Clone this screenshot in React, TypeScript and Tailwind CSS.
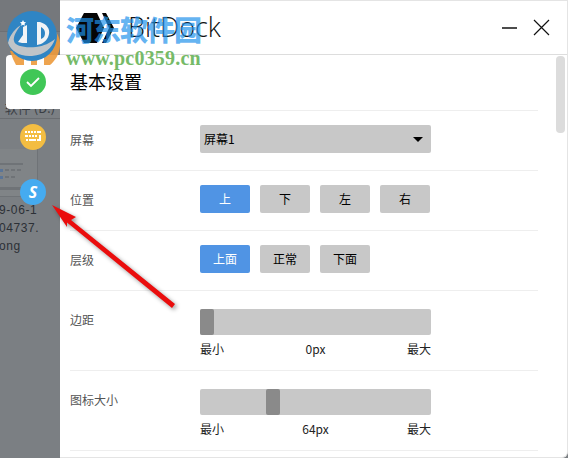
import React, { FC } from 'react';

const cjk = { fontFamily: '"Noto Sans CJK SC", "Liberation Sans", sans-serif' };

const Row: FC<{ label: string; h: string; children: React.ReactNode }> = ({ label, h, children }) => (
  <div className={`flex border-b border-[#eeeeee] ${h}`}>
    <div className="w-[130px] pt-[20px] text-[12px] leading-[18px] text-[#555555]">{label}</div>
    <div className="flex-1 pt-[14px]">{children}</div>
  </div>
);

const Btn: FC<{ text: string; active?: boolean }> = ({ text, active }) => (
  <div
    className={`flex h-[28px] w-[50px] items-center justify-center rounded-[2px] text-[12px] ${
      active ? 'bg-[#5094e4] text-white' : 'bg-[#c8c8c8] text-black'
    }`}
  >
    {text}
  </div>
);

const Slider: FC<{ value: string; thumbClass: string }> = ({ value, thumbClass }) => (
  <div className="w-[231px] pt-[4px]">
    <div className="h-[26px] rounded-[2px] bg-[#c8c8c8]">
      <div className={`h-[26px] w-[14px] rounded-[2px] bg-[#8a8a8a] ${thumbClass}`} />
    </div>
    <div className="mt-[5px] flex justify-between text-[12px] leading-[18px] text-[#222222]">
      <span>最小</span>
      <span>{value}</span>
      <span>最大</span>
    </div>
  </div>
);

const App: FC = () => {
  return (
    <div className="relative flex h-[458px] w-[568px] overflow-hidden bg-[#7b7f83]" style={cjk}>
      {/* desktop peeking out on the left */}
      <div className="flex w-[60px] shrink-0 flex-col overflow-hidden text-[#2c3036]">
        <div className="h-[32px] shrink-0 border-b border-[#6d7074] bg-[#75787c]" />
        <div className="flex h-[87px] shrink-0 items-end justify-center border-b border-[#6a6d71] pb-[1px] text-[13px] leading-[18px] whitespace-nowrap text-[#3a3e44]">
          软件 (D:)
        </div>
        <div className="h-[30px] shrink-0" />
        <div className="h-[48px] w-[38px] shrink-0 border-r border-b border-[#6f7377] bg-[#808487]">
          <div className="mt-[14px] h-[2px] w-[23px] bg-[#6f7377]" />
          <div className="mt-[4px] flex gap-[2px]">
            <div className="h-[3px] w-[3px] bg-[#5a7598]" />
            <div className="h-[2px] w-[4px] bg-[#6f7377]" />
            <div className="h-[2px] w-[4px] bg-[#6f7377]" />
            <div className="h-[2px] w-[4px] bg-[#6f7377]" />
          </div>
          <div className="mt-[4px] flex gap-[2px]">
            <div className="h-[3px] w-[3px] bg-[#5a7598]" />
            <div className="h-[2px] w-[4px] bg-[#6f7377]" />
            <div className="h-[2px] w-[4px] bg-[#6f7377]" />
          </div>
          <div className="mt-[8px] h-[3px] w-[34px] bg-[#6f7377]" />
        </div>
        <div className="mt-[4px] text-[12px] leading-[18px] whitespace-nowrap" style={{ fontFamily: '"Liberation Sans", sans-serif' }}>
          <div className="-ml-[1px] tracking-[0.6px]">9-06-1</div>
          <div className="-ml-[1px] tracking-[0.6px]">04737.</div>
          <div className="-ml-[1px] tracking-[0.6px]">ong</div>
        </div>
      </div>

      {/* settings window */}
      <div className="relative flex flex-1 flex-col overflow-hidden rounded-br-[6px] border-t border-r border-b border-[#e4e4e4] bg-white">
        <div className="flex h-[54px] shrink-0 items-center border-b border-[#dddddd] pl-[16px]">
          <svg width="38" height="30" viewBox="0 0 38 30" className="shrink-0">
            <path d="M8 0h13l7 15-7 15H8L0 15z" fill="#050505" />
            <path d="M26 0h4l8 15-8 15h-4l7-15z" fill="#050505" />
          </svg>
          <span className="ml-[14px] text-[27px] font-light text-[#111111]" style={{ fontFamily: '"Open Sans", sans-serif' }}>
            BitDock
          </span>
          <div className="ml-auto mr-[17px] flex items-center gap-[15px]">
            <svg width="16" height="16" viewBox="0 0 16 16">
              <path d="M0 8h15" stroke="#111" strokeWidth="1.4" />
            </svg>
            <svg width="17" height="17" viewBox="0 0 17 17">
              <path d="M1 1l15 15M16 1L1 16" stroke="#111" strokeWidth="1.2" fill="none" />
            </svg>
          </div>
        </div>

        <div className="relative flex-1 overflow-hidden pl-[10px] pr-[29px]">
          <div className="flex h-[56px] items-center border-b border-[#eeeeee] pb-[2px] text-[18px] text-black">基本设置</div>
          <Row label="屏幕" h="h-[60px]">
            <div className="flex h-[28px] w-[231px] items-center justify-between rounded-[2px] bg-[#c8c8c8] pl-[4px] pr-[8px] text-[12px] text-black">
              <span>屏幕1</span>
              <svg width="10" height="5" viewBox="0 0 10 5">
                <path d="M0 0h10L5 5z" fill="#000" />
              </svg>
            </div>
          </Row>
          <Row label="位置" h="h-[60px]">
            <div className="flex gap-[10px]">
              <Btn text="上" active />
              <Btn text="下" />
              <Btn text="左" />
              <Btn text="右" />
            </div>
          </Row>
          <Row label="层级" h="h-[60px]">
            <div className="flex gap-[10px]">
              <Btn text="上面" active />
              <Btn text="正常" />
              <Btn text="下面" />
            </div>
          </Row>
          <Row label="边距" h="h-[80px]">
            <Slider value="0px" thumbClass="ml-0" />
          </Row>
          <Row label="图标大小" h="h-[80px]">
            <Slider value="64px" thumbClass="ml-[66px]" />
          </Row>

          <div className="absolute right-[2px] top-[1px] h-[77px] w-[9px] rounded-[4px] bg-[#dcdcdc]" />
        </div>
      </div>

      {/* popup card, sits over the desktop and the window */}
      <div className="absolute left-[6px] top-[55px] flex h-[54px] w-[54px] items-center justify-center rounded-l-[4px] bg-white">
        <div className="flex h-[26px] w-[26px] items-center justify-center rounded-full bg-[#40c757]">
          <svg width="16" height="12" viewBox="0 0 16 12">
            <path d="M2 6l4 4 8-8" stroke="#fff" strokeWidth="1.8" fill="none" />
          </svg>
        </div>
      </div>

      {/* dock icons */}
      <div className="absolute left-[20px] top-[124px] flex h-[26px] w-[26px] items-center justify-center rounded-full bg-[#f3bd42]">
        <svg width="18" height="12" viewBox="0 0 18 12" fill="#fff">
          <rect x="1" y="0" width="2" height="2" />
          <rect x="4" y="0" width="2" height="2" />
          <rect x="7" y="0" width="2" height="2" />
          <rect x="10" y="0" width="2" height="2" />
          <rect x="13" y="0" width="4" height="2" />
          <rect x="1" y="4" width="3" height="2" />
          <rect x="5" y="4" width="2" height="2" />
          <rect x="8" y="4" width="2" height="2" />
          <rect x="11" y="4" width="2" height="2" />
          <rect x="15" y="4" width="2" height="5" />
          <rect x="2" y="8" width="2" height="2" />
          <rect x="5" y="8" width="7" height="2" />
          <rect x="13" y="8" width="4" height="2" />
        </svg>
      </div>
      <div
        className="absolute left-[20px] top-[179px] flex h-[26px] w-[26px] items-center justify-center rounded-full bg-[#45abf0] text-[16px] font-bold italic text-white"
        style={{ fontFamily: '"Open Sans", sans-serif' }}
      >
        S
      </div>

      {/* red arrow annotation */}
      <svg width="568" height="458" viewBox="0 0 568 458" className="pointer-events-none absolute left-0 top-0 drop-shadow-[2px_2px_2px_rgba(0,0,0,0.4)]">
        <path d="M52 205L76 217 71 220 175 304 172 308 67 222.500 67 227z" fill="#ea0d0d" />
      </svg>

      {/* site watermark */}
      <svg width="70" height="70" viewBox="0 0 70 70" className="pointer-events-none absolute left-0 top-0">
        <path d="M44 22C56 28 61 38 60 46c-1 9-5 15-10 19h-6V55l-8-4H10l3 8 3 6h8V55h7v10h6V55h6z" fill="#ec9a3c" opacity="0.9" />
        <circle cx="32" cy="36" r="25" fill="#2f85c4" />
        <path d="M8 43c2-9 8-15 13-18-5 6-8 12-7 16 1 5 10 7 22 6 8-1 14-4 19-8-3 9-10 16-23 17-12 1-21-5-24-13z" fill="#bfc4c8" />
        <path d="M18 42l5-7V27l4-2v18h-5z" fill="#f2f4f6" />
        <path d="M37 22h3c7 2 10 7 9 12-1 5-4 8-8 10l-4 1zm4 5v12c3-1 4-3 4-6 0-3-2-5-4-6z" fill="#f2f4f6" />
        <path d="M23 20l1 2 2 .3-1.500 1.400.4 2-1.900-1-1.900 1 .4-2L20 22.300l2-.3z" fill="#fff" />
      </svg>
      <div className="pointer-events-none absolute left-[66px] top-[6px] whitespace-nowrap text-[28px] font-black leading-[46px] tracking-[-1px] text-[#1f92ec]/70">
        河东软件园
      </div>
      <div
        className="pointer-events-none absolute left-[66px] top-[48px] whitespace-nowrap text-[20px] font-bold leading-[20px] tracking-[0.2px] text-[#76ba68]"
        style={{ fontFamily: '"Liberation Serif", serif' }}
      >
        www.pc0359.cn
      </div>
    </div>
  );
};

export default App;
